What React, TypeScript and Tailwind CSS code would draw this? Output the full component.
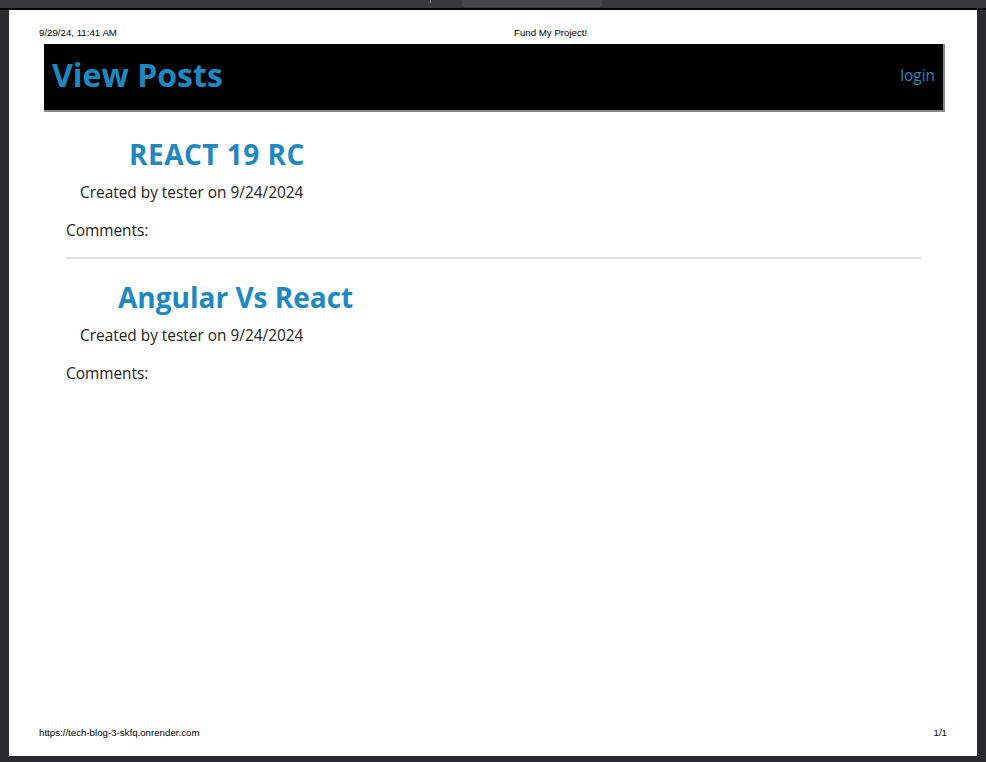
const blue = 'text-[#1e88c0]';

type Post = {
  title: string;
  author: string;
  date: string;
  indent: string;
};

const posts: Post[] = [
  { title: 'REACT 19 RC', author: 'tester', date: '9/24/2024', indent: 'pl-[63px] tracking-[0.5px]' },
  { title: 'Angular Vs React', author: 'tester', date: '9/24/2024', indent: 'pl-[52px]' },
];

function PostCard({ post }: { post: Post }) {
  return (
    <div className="flex flex-col">
      <h2
        className={`${post.indent} ${blue} text-[28px] leading-[28px] font-bold`}
      >
        {post.title}
      </h2>
      <p className="mt-[17px] pl-[14px] text-[15.4px] leading-[16px] text-[#222]">
        Created by {post.author} on {post.date}
      </p>
      <p className="mt-[22px] text-[15.4px] leading-[16px] text-[#222]">Comments:</p>
    </div>
  );
}

export default function App() {
  return (
    <div className="flex h-[762px] w-[986px] flex-col overflow-hidden bg-[#2a292e]">
      {/* viewer toolbar strip */}
      <div className="relative h-[8px] shrink-0 bg-[#38373d]">
        <div className="absolute left-[430px] top-0 h-[3px] w-px bg-[#8a8a8a]" />
        <div className="absolute left-[462px] top-0 h-[7px] w-[140px] bg-[#46454b]" />
      </div>
      <div className="h-[2px] shrink-0 bg-black" />

      <div className="flex flex-1 px-[9px] pb-[6px]">
        <div
          className="flex flex-1 flex-col bg-white"
          style={{ fontFamily: '"Open Sans", "Noto Sans", sans-serif' }}
        >
          {/* print header */}
          <div
            className="flex pl-[30px] pt-[17px] text-[9.7px] leading-[12px] text-black"
            style={{ fontFamily: '"Liberation Sans", Arial, sans-serif' }}
          >
            <span className="w-[475px]">9/29/24, 11:41 AM</span>
            <span>Fund My Project!</span>
          </div>

          {/* nav bar */}
          <header className="mx-[34px] ml-[35px] mt-[5px] flex h-[66px] justify-between bg-black shadow-[1px_1px_0_1px_#8a8a8a]">
            <h1 className={`ml-[8px] mt-[15px] text-[32px] leading-[32px] font-bold ${blue}`}>
              View Posts
            </h1>
            <a className={`mr-[8px] mt-[24px] text-[15.4px] leading-[16px] ${blue}`}>login</a>
          </header>

          {/* posts */}
          <main className="ml-[57px] mr-[56px] mt-[30px] flex flex-col">
            {posts.map((post, i) => (
              <div key={post.title} className="flex flex-col">
                {i > 0 && <div className="mb-[24px] mt-[18px] h-[2px] bg-[#dedede]" />}
                <PostCard post={post} />
              </div>
            ))}
          </main>

          <div className="flex-1" />

          {/* print footer */}
          <div
            className="flex justify-between px-[30px] pb-[17px] text-[9.7px] leading-[12px] text-black"
            style={{ fontFamily: '"Liberation Sans", Arial, sans-serif' }}
          >
            <span>https://tech-blog-3-skfq.onrender.com</span>
            <span>1/1</span>
          </div>
        </div>
      </div>
    </div>
  );
}
